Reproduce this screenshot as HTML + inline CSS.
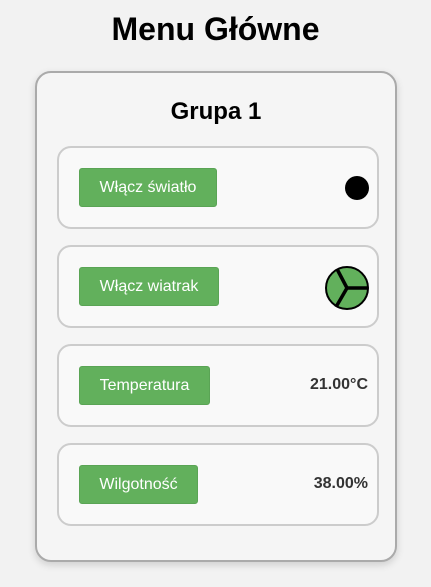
<!DOCTYPE html>
<html><head><meta charset="utf-8"><style>
body{margin:0;width:431px;height:587px;background:#f2f2f2;font-family:"Liberation Sans",sans-serif;position:relative;overflow:hidden}
h1{position:absolute;left:0;width:431px;top:10px;margin:0;text-align:center;font-size:32px;line-height:38px;font-weight:bold;color:#000}
.card{position:absolute;left:35px;top:71px;width:358px;height:487px;border:2px solid #aaa;border-radius:16px;background:#f5f5f5;box-shadow:0 3px 8px rgba(0,0,0,.15)}
h2{position:absolute;left:0;width:100%;top:25px;margin:0;text-align:center;font-size:24px;line-height:28px;font-weight:bold;color:#000}
.row{position:absolute;left:20px;width:318px;height:79px;border:2px solid #ccc;border-radius:14px;background:#f9f9f9}
.btn{position:absolute;left:20px;top:20px;height:37px;background:#62b05c;border:1px solid #5aa455;border-radius:3px;color:#fff;font-size:16px;line-height:37px;text-align:center;box-sizing:border-box}
.val{position:absolute;right:9px;top:29px;font-size:16px;font-weight:bold;color:#333;line-height:20px}
</style></head><body>
<h1>Menu Główne</h1>
<div class="card">
<h2>Grupa 1</h2>
<div class="row" style="top:73px"><div class="btn" style="width:138px;height:39px">Włącz światło</div>
<div style="position:absolute;left:286px;top:28px;width:24px;height:24px;border-radius:50%;background:#000"></div></div>
<div class="row" style="top:172px"><div class="btn" style="width:140px;height:39px">Włącz wiatrak</div>
<svg style="position:absolute;left:265px;top:18px" width="46" height="46" viewBox="0 0 46 46"><circle cx="23" cy="23" r="21" fill="#62b05c" stroke="#000" stroke-width="2"/><g stroke="#000" stroke-width="3.5" fill="none"><line x1="23" y1="23" x2="44" y2="23"/><line x1="23" y1="23" x2="13" y2="4"/><line x1="23" y1="23" x2="12" y2="42"/></g></svg></div>
<div class="row" style="top:271px"><div class="btn" style="width:131px;height:39px">Temperatura</div><div class="val">21.00°C</div></div>
<div class="row" style="top:370px"><div class="btn" style="width:119px;height:39px">Wilgotność</div><div class="val">38.00%</div></div>
</div>
</body></html>
